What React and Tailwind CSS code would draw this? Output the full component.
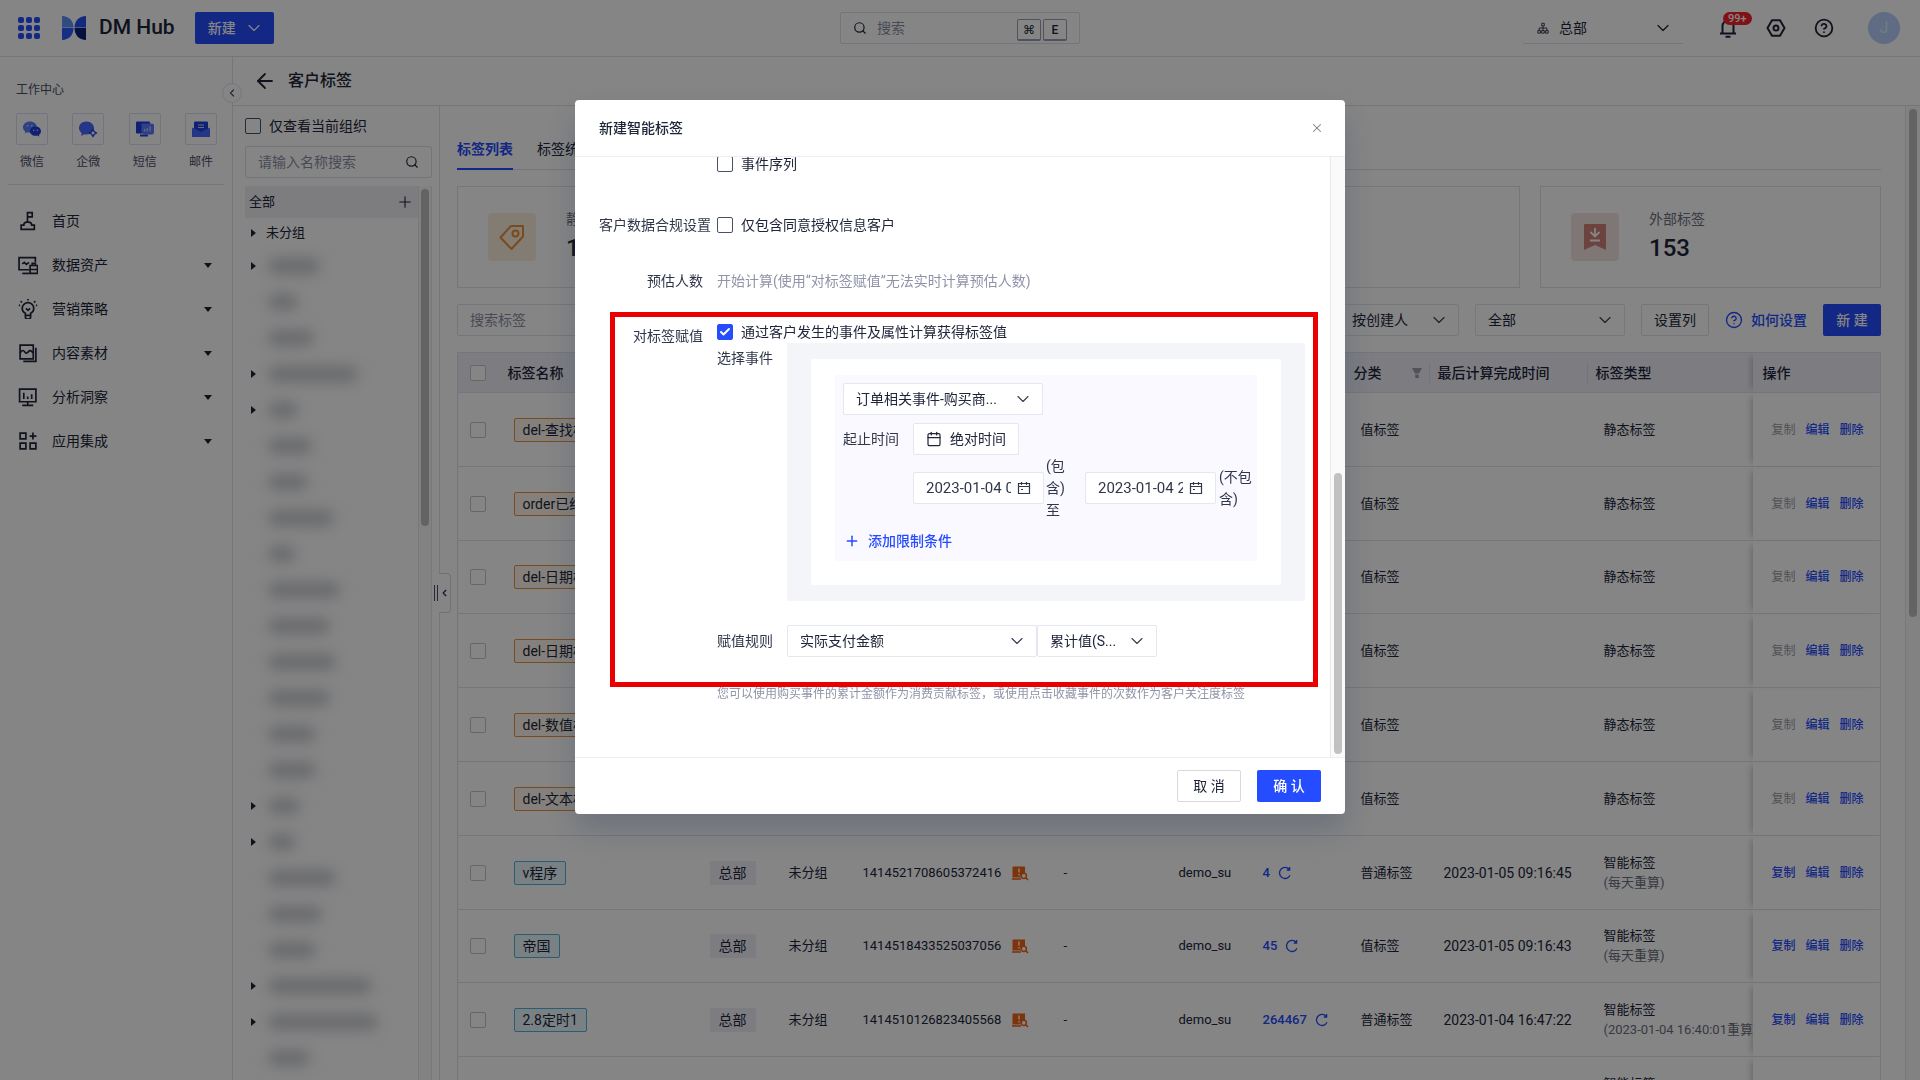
import React from "react";
import { Search, ChevronDown, ChevronLeft, ArrowLeft, Plus, X, Check, CircleHelp, Calendar } from "lucide-react";

const SIDE_MENU = [
  { label: "首页", icon: "home", expandable: false },
  { label: "数据资产", icon: "data", expandable: true },
  { label: "营销策略", icon: "bulb", expandable: true },
  { label: "内容素材", icon: "content", expandable: true },
  { label: "分析洞察", icon: "chart", expandable: true },
  { label: "应用集成", icon: "apps", expandable: true },
];

const CHANNELS = [
  { label: "微信", icon: "wechat" },
  { label: "企微", icon: "wecom" },
  { label: "短信", icon: "sms" },
  { label: "邮件", icon: "mail" },
];

/* Redacted tree nodes: bar width in pixels and whether the node has children. */
const TREE = [
  { w: 52, open: true },
  { w: 30 },
  { w: 46 },
  { w: 90, open: true },
  { w: 30, open: true },
  { w: 44 },
  { w: 40 },
  { w: 66 },
  { w: 28 },
  { w: 72 },
  { w: 62 },
  { w: 68 },
  { w: 62 },
  { w: 48 },
  { w: 48 },
  { w: 32, open: true },
  { w: 28, open: true },
  { w: 68 },
  { w: 54 },
  { w: 48 },
  { w: 104, open: true },
  { w: 110, open: true },
  { w: 42 },
];

const fixedRow = (name) => ({ name, kind: "fixed", category: "值标签", type: "静态标签" });
const smartRow = (name, id, count, category, time, note) => ({
  name,
  kind: "smart",
  id,
  count,
  category,
  time,
  type: "智能标签",
  note,
});

const ROWS = [
  fixedRow("del-查找标签"),
  fixedRow("order已结算"),
  fixedRow("del-日期标签"),
  fixedRow("del-日期标签"),
  fixedRow("del-数值标签"),
  fixedRow("del-文本标签"),
  smartRow("v程序", "1414521708605372416", "4", "普通标签", "2023-01-05 09:16:45", "(每天重算)"),
  smartRow("帝国", "1414518433525037056", "45", "值标签", "2023-01-05 09:16:43", "(每天重算)"),
  smartRow("2.8定时1", "1414510126823405568", "264467", "普通标签", "2023-01-04 16:47:22", "(2023-01-04 16:40:01重算)"),
  smartRow("定时2", "1414510126823405312", "12", "普通标签", "2023-01-04 16:47:20", "(每天重算)"),
];

function MenuIcon({ name }) {
  const paths = {
    home: (
      <>
        <path d="M3 17.5v-4h2.5c0-2 1-3 3-3h1.5c2 0 3 1 3 3h2.5v4z" />
        <path d="M9 10.500V1.500h4.500v4H9" />
      </>
    ),
    data: (
      <>
        <path d="M11 14H1V2.500h15.500V7" />
        <path d="M4 8.500l2-1.500 2 2 2.500-2" />
        <path d="M4 17.500h7" />
        <path d="M11.500 10h7v7.500h-7zM11.500 13.800h7M13.500 10V8h3v2" />
      </>
    ),
    bulb: (
      <>
        <path d="M7 13.500C5 12.500 4 11 4 9a5.500 5.500 0 0 1 11 0c0 2-1 3.500-3 4.500V17a2.500 2 0 0 1-5 0zM7 15.500h5" />
        <path d="M7.500 9l2 1.800 2-1.800" />
        <path d="M9.500 0v1.500M2.500 2l1.300 1.300M16.500 2l-1.300 1.300M.800 6h1.200M17 6h1.200" />
      </>
    ),
    content: (
      <>
        <path d="M2 2h12.500v13H2z" />
        <path d="M17 4.500v13H5" />
        <path d="M2 9.500c2-3 3-3 4.500-1S9 9.500 10 8s2.500-1 4.500 1.500" />
      </>
    ),
    chart: (
      <>
        <path d="M1.500 2h15.500v12H1.500zM4 17.500h10.500M9.200 14v3.500" />
        <path d="M5.500 5.500v6M9.200 9v2.500M13 7v4.500" />
      </>
    ),
    apps: (
      <>
        <path d="M2 2h5.500v5.500H2zM2 11.500h5.500V17H2zM11.500 11.500H17V17h-5.500z" />
        <path d="M14.200 1.500v6.500M11 4.800h6.500" />
      </>
    ),
  };
  return (
    <svg viewBox="0 0 19 19" className="size-5 shrink-0" fill="none" stroke="currentColor" strokeWidth="1.6" aria-hidden="true">
      {paths[name]}
    </svg>
  );
}

function ChannelIcon({ name }) {
  const art = {
    wechat: (
      <>
        <path fill="#5b7cff" d="M8 1.500C4 1.500 1 4 1 7.200c0 1.800 1 3.300 2.400 4.300L3 13.500l2.300-1.200c.8.200 1.700.4 2.700.4 4 0 6.800-2.500 6.800-5.500S12 1.500 8 1.500z" />
        <path fill="#1e3fe0" d="M13.500 6.500c-3.300 0-5.500 2-5.500 4.700 0 2.600 2.300 4.600 5.500 4.600.7 0 1.400-.1 2-.3l1.900 1-.4-1.700c1.300-.9 2-2.100 2-3.600 0-2.700-2.400-4.700-5.500-4.700z" />
        <g fill="#c8d2ff">
          <circle cx="5.600" cy="5.800" r=".9" />
          <circle cx="9.800" cy="5.800" r=".9" />
          <circle cx="11.800" cy="10.300" r=".8" />
          <circle cx="15.300" cy="10.300" r=".8" />
        </g>
      </>
    ),
    wecom: (
      <>
        <path fill="#4668ff" d="M8.500 1.500C4.300 1.500 1 4.300 1 8c0 2 1 3.700 2.600 4.900L3.300 16l3-1.800c.7.100 1.400.2 2.200.2 4.200 0 7.500-2.800 7.500-6.400S12.700 1.500 8.500 1.500z" />
        <path fill="#fff" stroke="#1e3fe0" strokeWidth="1.300" d="M15 9.500l1.300 2.200 2.200 1.300-2.200 1.300L15 16.500l-1.300-2.200-2.200-1.300 2.200-1.300z" />
      </>
    ),
    sms: (
      <>
        <rect x="1" y="1.500" width="14" height="12" rx="1" fill="#1e3fe0" />
        <rect x="5" y="14.500" width="8" height="2" fill="#1e3fe0" />
        <path fill="#5b7cff" d="M6.500 3.500H17a2 2 0 0 1 2 2v7a2 2 0 0 1-2 2h-8l-2.500-2z" />
        <path stroke="#c8d2ff" strokeWidth="1.200" d="M9.500 9v2.500M12.200 8v3.500M15 6.500v5" />
      </>
    ),
    mail: (
      <>
        <path fill="#1e3fe0" d="M4 1.500h12a1 1 0 0 1 1 1V10l-7 3-7-3V2.500a1 1 0 0 1 1-1z" />
        <path stroke="#c8d2ff" strokeWidth="1.200" d="M7 5h6M7 7.500h6" />
        <path fill="#4668ff" d="M1 7.500l9 4.500 9-4.500v9.500H1z" />
      </>
    ),
  };
  return (
    <svg viewBox="0 0 20 18" className="h-[18px] w-5" fill="none" aria-hidden="true">
      {art[name]}
    </svg>
  );
}

function Checkbox({ id, checked = false, strong = false, label }) {
  return (
    <span className="relative inline-flex size-4 shrink-0">
      <input
        id={id}
        type="checkbox"
        defaultChecked={checked}
        aria-label={label}
        className={
          strong
            ? "peer size-4 appearance-none rounded-xs border border-[#4a5066] bg-white checked:border-[#264cff] checked:bg-[#264cff]"
            : "peer size-4 appearance-none rounded-xs border border-[#c3c5cd] bg-white checked:border-[#264cff] checked:bg-[#264cff]"
        }
      />
      <Check className="pointer-events-none absolute top-0.5 left-0.5 hidden size-3 text-white peer-checked:block" strokeWidth={4} />
    </span>
  );
}

function SelectBox({ label, value, className = "" }) {
  return (
    <span className={`relative inline-flex h-8 ${className}`}>
      <select
        aria-label={label}
        className="h-full w-full appearance-none rounded-xs border border-[#e4e6f0] bg-white pr-8 pl-3 text-sm text-[#20263a] outline-none"
      >
        <option>{value}</option>
      </select>
      <ChevronDown className="pointer-events-none absolute top-1.5 right-2.5 size-5 text-[#3c4256]" strokeWidth={1.4} />
    </span>
  );
}

function TopBar() {
  const dots = [0, 1, 2, 3, 4, 5, 6, 7, 8];
  return (
    <header className="flex h-[57px] shrink-0 items-center justify-between border-b border-[#e0e2ec] pr-5 pl-[18px]">
      <div className="flex flex-1 items-center">
        <button className="grid grid-cols-3 gap-0.5" aria-label="应用切换">
          {dots.map((d) => (
            <span key={d} className="size-1.5 rounded-[2px] bg-[#264cff]" />
          ))}
        </button>
        <svg viewBox="0 0 26 26" className="ml-[21px] size-[26px]" aria-hidden="true">
          <path d="M1 1c7 0 11.500 5 11.500 11.500H1z" fill="#5e8ef5" />
          <path d="M25 1c-7 0-11.500 5-11.500 11.500H25z" fill="#2450f0" />
          <path d="M1 25c7 0 11.500-5 11.500-12H1z" fill="#2a5bff" />
          <path d="M25 25c-7 0-11.500-5-11.500-12H25z" fill="#0c1f78" />
        </svg>
        <span className="ml-3 text-[21px] font-medium">DM Hub</span>
        <button className="ml-5 flex h-8 items-center gap-2 rounded-xs bg-[#264cff] pr-2.5 pl-[13px] text-sm font-medium text-white">
          新建
          <ChevronDown className="size-5" strokeWidth={1.4} />
        </button>
      </div>
      <div className="ml-0.5 flex h-8 w-60 items-center rounded-xs border border-[#dfe1ec] px-3">
        <Search className="mr-2.5 size-3.5 shrink-0" strokeWidth={2} />
        <input
          aria-label="搜索"
          placeholder="搜索"
          className="w-full min-w-0 flex-1 bg-transparent text-sm outline-none placeholder:text-[#8b90a5]"
        />
        <kbd className="mt-1 mr-0.5 flex h-[22px] w-6 shrink-0 items-center justify-center rounded-xs border border-b-2 border-[#9ca0b0] font-[Roboto,DejaVu_Sans,sans-serif] text-xs font-medium">
          ⌘
        </kbd>
        <kbd className="mt-1 flex h-[22px] w-6 shrink-0 items-center justify-center rounded-xs border border-b-2 border-[#9ca0b0] font-[Roboto,sans-serif] text-xs font-medium">
          E
        </kbd>
      </div>
      <div className="flex flex-1 items-center justify-end">
        <div className="relative mr-9 flex h-8 w-40 items-center border-b border-[#dfe1ec] pl-3.5">
          <svg viewBox="0 0 14 14" className="size-3 shrink-0" fill="none" stroke="currentColor" strokeWidth="1" aria-hidden="true">
            <path d="M5.500 1.500h3v3h-3zM7 4.500V10M2.500 10V7h9v3M1 10h3v3H1zM5.500 10h3v3h-3zM10 10h3v3h-3z" />
          </svg>
          <select aria-label="组织" className="h-full w-full appearance-none bg-transparent pl-2.5 text-sm outline-none">
            <option>总部</option>
          </select>
          <ChevronDown className="pointer-events-none absolute top-1.5 right-2.5 size-5" strokeWidth={1.5} />
        </div>
        <button className="relative" aria-label="通知">
          <svg viewBox="0 0 18 20" className="h-5 w-[18px]" fill="none" stroke="currentColor" strokeWidth="2" aria-hidden="true">
            <path d="M1 15.500h16M3.500 15V8a5.500 5.500 0 0 1 11 0v7M6.500 18.700h5" />
          </svg>
          <span className="absolute -top-1.5 left-1 rounded-full bg-[#f5222d] px-[5px] text-[11px] leading-[13px] font-medium text-white">99+</span>
        </button>
        <button className="ml-[29px]" aria-label="设置">
          <svg viewBox="0 0 20 20" className="size-5" fill="none" stroke="currentColor" strokeWidth="2" aria-hidden="true">
            <path d="M6 2.200h8L18.500 10 14 17.800H6L1.500 10z" strokeLinejoin="round" />
            <circle cx="10" cy="10" r="2.500" />
          </svg>
        </button>
        <button className="ml-7" aria-label="帮助">
          <CircleHelp className="size-5" strokeWidth={2.2} />
        </button>
        <span className="ml-[34px] flex size-8 items-center justify-center rounded-full bg-[#b8cffb] text-base text-[#dfe9ff]">J</span>
      </div>
    </header>
  );
}

function Sidebar() {
  return (
    <aside className="relative w-[233px] shrink-0 border-r border-[#e0e2ec]">
      <button
        aria-label="收起导航"
        className="absolute top-[26px] -right-2.5 z-10 flex size-5 items-center justify-center rounded-full border border-[#e0e2ec] bg-white"
      >
        <ChevronLeft className="size-3 text-[#4a5066]" strokeWidth={2.5} />
      </button>
      <div className="mx-2 border-b border-[#e0e2ec] pt-6 pr-[7px] pb-[13px] pl-2">
        <h2 className="text-xs leading-[18px] text-[#4a5066]">工作中心</h2>
        <div className="mt-3.5 flex justify-between">
          {CHANNELS.map((c) => (
            <a key={c.label} href="#" className="flex w-8 flex-col items-center gap-2 text-xs leading-[18px] text-[#4a5066]">
              <span className="flex size-8 items-center justify-center rounded-xs border border-[#dcdff0]">
                <ChannelIcon name={c.icon} />
              </span>
              {c.label}
            </a>
          ))}
        </div>
      </div>
      <nav className="pt-3.5">
        {SIDE_MENU.map((m) => (
          <a key={m.label} href="#" className="flex h-11 items-center pr-5 pl-[18px] text-sm">
            <MenuIcon name={m.icon} />
            <span className="ml-3.5 flex-1">{m.label}</span>
            {m.expandable && (
              <svg viewBox="0 0 8 5" className="h-[5px] w-2" aria-hidden="true">
                <path d="M0 0h8L4 5z" fill="currentColor" />
              </svg>
            )}
          </a>
        ))}
      </nav>
    </aside>
  );
}

function TreeArrow() {
  return (
    <svg viewBox="0 0 5 8" className="h-2 w-[5px]" aria-hidden="true">
      <path d="M0 0l5 4-5 4z" fill="currentColor" />
    </svg>
  );
}

function TreePanel() {
  return (
    <section className="relative flex w-[207px] shrink-0 flex-col border-r border-[#e0e2ec] pt-3 pl-3">
      <label htmlFor="only-org" className="flex h-4 items-center gap-2 text-sm">
        <Checkbox id="only-org" strong />
        仅查看当前组织
      </label>
      <div className="mt-3 mr-[7px] flex h-8 items-center rounded-xs border border-[#dfe1ec] px-3">
        <input
          aria-label="请输入名称搜索"
          placeholder="请输入名称搜索"
          className="w-full min-w-0 flex-1 bg-transparent text-sm outline-none placeholder:text-[#8b90a5]"
        />
        <Search className="size-3.5 shrink-0" strokeWidth={2} />
      </div>
      <div className="mt-2 mr-[7px] flex min-h-0 flex-1 overflow-hidden">
        <div className="flex-1">
          <div className="flex h-8 items-center justify-between bg-[#efeff6] pr-1 pl-1 text-[13px]">
            全部
            <button aria-label="新增分组">
              <Plus className="size-[18px]" strokeWidth={1.5} />
            </button>
          </div>
          <div className="flex h-[30px] items-center gap-2.5 pl-1.5 text-[13px]">
            <TreeArrow />
            未分组
          </div>
          <ul>
            {TREE.map((n, i) => (
              <li key={i} className="flex h-9 items-center gap-3 pl-1.5">
                <span className="flex w-[5px]">{n.open && <TreeArrow />}</span>
                <span className="h-4 rounded-full bg-[#4a5066]/30 blur-[7px]" style={{ width: n.w }} />
              </li>
            ))}
          </ul>
        </div>
        <div className="w-3.5 border-x border-[#e6e7ee] bg-[#fafafa] px-[2px] pt-[3px]">
          <div className="h-[337px] w-2 rounded-full bg-[#bfbfbf]" />
        </div>
      </div>
      <div className="absolute top-[479px] right-px h-4 w-1 border-x border-[#4a5066]" />
      <button
        aria-label="收起分组"
        className="absolute top-[467px] -right-3 flex h-10 w-3 items-center justify-center rounded-r border border-l-0 border-[#d6d9e4] bg-white"
      >
        <ChevronLeft className="size-3" strokeWidth={2.5} />
      </button>
    </section>
  );
}

function StatCard({ label, value, children, tint }) {
  return (
    <div className="flex h-[102px] items-center border border-[#e0e2ec] pl-[30px]">
      <span className={`flex size-12 items-center justify-center rounded-sm ${tint}`}>{children}</span>
      <div className="ml-[30px]">
        <p className="text-sm leading-[22px] text-[#6b7080]">{label}</p>
        <p className="text-2xl leading-9 font-medium">{value}</p>
      </div>
    </div>
  );
}

function TagGlyph() {
  return (
    <svg viewBox="0 0 26 26" className="size-[26px]" fill="none" stroke="#e8913c" strokeWidth="2" aria-hidden="true">
      <path d="M12 1.500h12V12L12.500 24.500 1.500 13z" strokeLinejoin="round" transform="translate(0 .5)" />
      <circle cx="16.500" cy="9.500" r="3" />
    </svg>
  );
}

function HeadCell({ children, divider = false, filter = false }) {
  return (
    <th className="h-10 p-0 text-left font-medium">
      <div className={divider ? "flex items-center justify-between border-r border-[#dcdee8] px-2" : "flex items-center justify-between px-2"}>
        {children}
        {filter && (
          <svg viewBox="0 0 12 12" className="-mr-0.5 size-3 text-[#9ca0ae]" aria-hidden="true">
            <path d="M1 1h10L8 6.500H4zM4.200 7.500h3.600V11H4.200z" fill="currentColor" />
          </svg>
        )}
      </div>
    </th>
  );
}

function TagTable() {
  return (
    <table className="mt-4 w-full table-fixed border-collapse border border-[#e0e2ec] text-[13px]">
      <colgroup>
        <col className="w-[42px]" />
        <col />
        <col className="w-[78px]" />
        <col className="w-[74px]" />
        <col className="w-[201px]" />
        <col className="w-[116px]" />
        <col className="w-[84px]" />
        <col className="w-[98px]" />
        <col className="w-[84px]" />
        <col className="w-[158px]" />
        <col className="w-[165px]" />
        <col className="w-32" />
      </colgroup>
      <thead>
        <tr className="border-b border-[#e0e2ec] bg-[#f0f0f8] text-sm">
          <th className="p-0 pl-3">
            <div className="flex">
              <Checkbox label="全选" />
            </div>
          </th>
          <HeadCell>标签名称</HeadCell>
          <HeadCell>组织</HeadCell>
          <HeadCell>分组</HeadCell>
          <HeadCell>标签ID</HeadCell>
          <HeadCell>描述</HeadCell>
          <HeadCell>创建人</HeadCell>
          <HeadCell>人数</HeadCell>
          <HeadCell divider filter>分类</HeadCell>
          <HeadCell divider>最后计算完成时间</HeadCell>
          <HeadCell>标签类型</HeadCell>
          <th className="p-0 pl-2.5 text-left font-medium shadow-[-6px_0_6px_-4px_rgba(0,0,0,0.2)]">操作</th>
        </tr>
      </thead>
      <tbody>
        {ROWS.map((r, i) => (
          <tr key={i} className="h-[74px] border-b border-[#e0e2ec] whitespace-nowrap nth-[5n+3]:h-[73px]">
            <td className="p-0 pl-3">
              <div className="flex">
                <Checkbox label={r.name} />
              </div>
            </td>
            <td className="p-0 pl-3.5">
              <span
                className={
                  r.kind === "fixed"
                    ? "inline-flex h-6 items-center rounded-xs border border-[#e8913c] bg-[#fff6ec] px-2 text-sm"
                    : "inline-flex h-6 items-center rounded-xs border border-[#4fb3d9] bg-[#e9f7fd] px-2 text-sm"
                }
              >
                {r.name}
              </span>
            </td>
            <td className="p-0 pl-[15px]">
              <span className="inline-flex h-6 items-center bg-[#f0f0f8] px-[9px] text-sm">总部</span>
            </td>
            <td className="p-0 pl-4">未分组</td>
            <td className="p-0 pl-4">
              {r.id && (
                <span className="flex items-center gap-2.5">
                  {r.id}
                  <svg viewBox="0 0 18 16" className="h-4 w-[18px]" aria-hidden="true">
                    <path d="M2 1.500h12V8a4 4 0 0 0-4.500 4.500H1.500V2z" fill="#f0651a" />
                    <path d="M1 14h9" stroke="#f0651a" strokeWidth="1.600" />
                    <path d="M8 3.500v4M8 9v1.500" stroke="#fff" strokeWidth="1.400" />
                    <circle cx="12.800" cy="10.800" r="2.600" fill="#fff" stroke="#f0651a" strokeWidth="1.500" />
                    <path d="M14.700 12.700l2.300 2.300" stroke="#f0651a" strokeWidth="1.600" />
                  </svg>
                </span>
              )}
            </td>
            <td className="p-0 pl-4">-</td>
            <td className="p-0 pl-[15px]">demo_su</td>
            <td className="p-0 pl-[15px]">
              {r.count && (
                <span className="flex items-center gap-2 font-medium text-[#264cff]">
                  {r.count}
                  <svg viewBox="0 0 14 14" className="size-3.5" fill="none" stroke="currentColor" strokeWidth="1.300" aria-hidden="true">
                    <path d="M11.300 3.500A5.500 5.500 0 1 0 12 9.300M11.600 1v3H8.800" />
                  </svg>
                </span>
              )}
            </td>
            <td className="p-0 pl-[15px]">{r.category}</td>
            <td className="p-0 pl-3.5 text-sm">{r.time}</td>
            <td className="overflow-hidden p-0 pl-4 leading-5">
              {r.type}
              {r.note && <div className="text-[#6b7080]">{r.note}</div>}
            </td>
            <td className="p-0 pl-[19px] shadow-[-6px_0_6px_-4px_rgba(0,0,0,0.2)]">
              <div className="flex gap-2.5 text-xs font-medium text-[#264cff]">
                <button className="disabled:font-normal disabled:text-[#9a9ca6]" disabled={r.kind === "fixed"}>
                  复制
                </button>
                <button>编辑</button>
                <button>删除</button>
              </div>
            </td>
          </tr>
        ))}
      </tbody>
    </table>
  );
}

function MainArea() {
  return (
    <main className="flex min-w-0 flex-1 overflow-hidden">
      <div className="min-w-0 flex-1 pr-6 pl-[17px]">
        <div className="flex h-16 items-end gap-6 border-b border-[#e0e2ec] text-sm">
          <button className="-mb-px h-[33px] border-b-2 border-[#264cff] pb-2 font-bold text-[#264cff]">标签列表</button>
          <button className="-mb-px h-[33px] border-b-2 border-transparent pb-2">标签统计</button>
        </div>
        <div className="mt-4 grid grid-cols-4 gap-5">
          <StatCard label="静态标签" value="128" tint="bg-[#faeddb]">
            <TagGlyph />
          </StatCard>
          <StatCard label="智能标签" value="236" tint="bg-[#e9f7fd]">
            <TagGlyph />
          </StatCard>
          <StatCard label="模型标签" value="12" tint="bg-[#f0f0f8]">
            <TagGlyph />
          </StatCard>
          <StatCard label="外部标签" value="153" tint="bg-[#f1e4e3]">
            <svg viewBox="0 0 22 26" className="h-[26px] w-[22px]" aria-hidden="true">
              <path d="M0 1a1 1 0 0 1 1-1h20a1 1 0 0 1 1 1v25l-11-5-11 5z" fill="#cf807a" />
              <path d="M11 4v8M6.500 8l4.500 4.500L15.500 8M6 16.500h10" fill="none" stroke="#fff" strokeWidth="1.800" />
            </svg>
          </StatCard>
        </div>
        <div className="mt-4 flex items-center gap-4">
          <input
            aria-label="搜索标签"
            placeholder="搜索标签"
            className="h-8 w-[300px] rounded-xs border border-[#dfe1ec] px-3 text-sm outline-none placeholder:text-[#8b90a5]"
          />
          <div className="flex-1" />
          <SelectBox label="创建人" value="按创建人" className="w-[120px]" />
          <SelectBox label="标签范围" value="全部" className="w-[150px]" />
          <button className="h-8 rounded-xs border border-[#dfe1ec] px-3 text-sm">设置列</button>
          <a href="#" className="flex items-center gap-2 text-sm font-medium text-[#264cff]">
            <CircleHelp className="size-[18px]" strokeWidth={1.8} />
            如何设置
          </a>
          <button className="h-8 w-[58px] rounded-xs bg-[#264cff] text-sm font-medium text-white">新 建</button>
        </div>
        <TagTable />
      </div>
      <div className="w-[15px] shrink-0 border-l border-[#e6e7ee] bg-[#fafafa] px-[3px] pt-[3px]">
        <div className="h-[508px] w-2 rounded-full bg-[#bfbfbf]" />
      </div>
    </main>
  );
}

function FormRow({ label, children, tight = false }) {
  return (
    <div className="flex items-start">
      <div className={tight ? "w-28 shrink-0 whitespace-nowrap" : "w-[104px] shrink-0 text-right"}>{label}</div>
      <div className={tight ? "ml-1.5 min-w-0 flex-1" : "ml-3.5 min-w-0 flex-1"}>{children}</div>
    </div>
  );
}

function CheckLine({ id, label, checked }) {
  return (
    <label htmlFor={id} className="flex items-center gap-2 text-[#20263a]">
      <Checkbox id={id} checked={checked} strong />
      {label}
    </label>
  );
}

function DateField({ label, value }) {
  return (
    <span className="flex h-8 w-[131px] shrink-0 items-center rounded-xs border border-[#e4e6f0] bg-white px-3">
      <input aria-label={label} defaultValue={value} className="w-full min-w-0 flex-1 bg-transparent text-[15px] outline-none" />
      <svg viewBox="0 0 14 14" className="ml-1.5 size-3.5 shrink-0" fill="none" stroke="currentColor" strokeWidth="1.200" aria-hidden="true">
        <path d="M1.500 2.500h11v10h-11zM1.500 5.500h11M4.500 1v3M9.500 1v3M4 8.500h2" />
      </svg>
    </span>
  );
}

function EventPanel() {
  return (
    <div className="-mt-1 w-[518px] bg-[#f4f5f9] px-6 py-4">
      <div className="bg-white px-6 pt-4 pb-6">
        <div className="bg-[#faf9ff] p-2 pb-1">
          <SelectBox label="选择事件" value="订单相关事件-购买商..." className="w-[200px]" />
          <div className="mt-2 flex items-center gap-3.5">
            起止时间
            <button className="flex h-8 items-center gap-2 rounded-xs border border-[#e4e6f0] bg-white px-3 text-[#20263a]">
              <Calendar className="size-4" strokeWidth={1.8} />
              绝对时间
            </button>
          </div>
          <div className="flex items-center pl-[70px]">
            <DateField label="开始时间" value="2023-01-04 00:00:00" />
            <span className="mr-[13px] ml-[2px] w-[26px] shrink-0">
              (包
              <br />
              含)
              <br />至
            </span>
            <DateField label="结束时间" value="2023-01-04 23:59:59" />
            <span className="ml-[3px] shrink-0">
              (不包
              <br />
              含)
            </span>
          </div>
          <button className="mt-1 flex h-8 items-center gap-2 pl-px font-medium text-[#264cff]">
            <Plus className="size-4" strokeWidth={2.2} />
            添加限制条件
          </button>
        </div>
      </div>
    </div>
  );
}

function CreateTagDialog() {
  return (
    <div
      role="dialog"
      aria-label="新建智能标签"
      className="flex w-[770px] flex-col rounded bg-white text-sm leading-[22px] text-[#31374b] shadow-[0_16px_32px_rgba(20,40,80,0.22)]"
    >
      <div className="flex h-[57px] items-center justify-between border-b border-[#ececf1] pr-[21px] pl-6">
        <h1 className="font-medium text-[#20263a]">新建智能标签</h1>
        <button aria-label="关闭">
          <X className="size-3.5 text-[#7d7f88]" strokeWidth={1.8} />
        </button>
      </div>
      <div className="flex h-[600px] overflow-hidden">
        <div className="-mt-1 flex-1 pl-6">
          <FormRow label="">
            <CheckLine id="event-seq" label="事件序列" />
          </FormRow>
          <div className="mt-[39px]">
            <FormRow label="客户数据合规设置" tight>
              <CheckLine id="consent" label="仅包含同意授权信息客户" />
            </FormRow>
          </div>
          <div className="mt-[34px]">
            <FormRow label="预估人数">
              <p className="text-[#8f94a8]">开始计算(使用“对标签赋值”无法实时计算预估人数)</p>
            </FormRow>
          </div>
          <div className="relative mt-[29px]">
            <FormRow label={<span className="block pt-1">对标签赋值</span>}>
              <CheckLine id="assign" label="通过客户发生的事件及属性计算获得标签值" checked />
              <div className="mt-1 flex items-start gap-3.5">
                <span className="shrink-0">选择事件</span>
                <EventPanel />
              </div>
              <div className="mt-6 flex items-center">
                <span className="mr-3.5">赋值规则</span>
                <SelectBox label="赋值字段" value="实际支付金额" className="w-[250px]" />
                <SelectBox label="聚合方式" value="累计值(S..." className="w-[120px]" />
              </div>
              <p className="mt-[27px] text-xs leading-5 text-[#8f94a8]">
                您可以使用购买事件的累计金额作为消费贡献标签，或使用点击收藏事件的次数作为客户关注度标签
              </p>
            </FormRow>
            <div className="pointer-events-none absolute -top-[9px] right-3 bottom-[17px] left-[11px] border-[5px] border-[#ea0000]" />
          </div>
        </div>
        <div className="flex w-[15px] shrink-0 items-end border-l border-[#e8e8ec] bg-[#fafafa] px-[3px] pb-[3px]">
          <div className="h-[281px] w-2 rounded-full bg-[#c1c1c1]" />
        </div>
      </div>
      <div className="flex h-[57px] items-center justify-end gap-4 border-t border-[#ececf1] pr-6">
        <button className="h-8 w-16 rounded-xs border border-[#d9d9d9] text-[#20263a]">取 消</button>
        <button className="h-8 w-16 rounded-xs bg-[#264cff] font-medium text-white">确 认</button>
      </div>
    </div>
  );
}

export default function App() {
  return (
    <div className="flex h-screen flex-col overflow-hidden bg-white font-[Roboto,Noto_Sans_CJK_SC,sans-serif] text-[#20263a]">
      <TopBar />
      <div className="flex min-h-0 flex-1">
        <Sidebar />
        <div className="flex min-w-0 flex-1 flex-col">
          <div className="flex h-[49px] shrink-0 items-center gap-[11px] border-b border-[#e0e2ec] pl-5">
            <a href="#" aria-label="返回">
              <ArrowLeft className="size-6" strokeWidth={1.8} />
            </a>
            <h1 className="text-base font-medium">客户标签</h1>
          </div>
          <div className="flex min-h-0 flex-1">
            <TreePanel />
            <MainArea />
          </div>
        </div>
      </div>
      <div className="fixed inset-0 z-50 flex items-start justify-center bg-black/48 pt-[100px]">
        <CreateTagDialog />
      </div>
    </div>
  );
}
